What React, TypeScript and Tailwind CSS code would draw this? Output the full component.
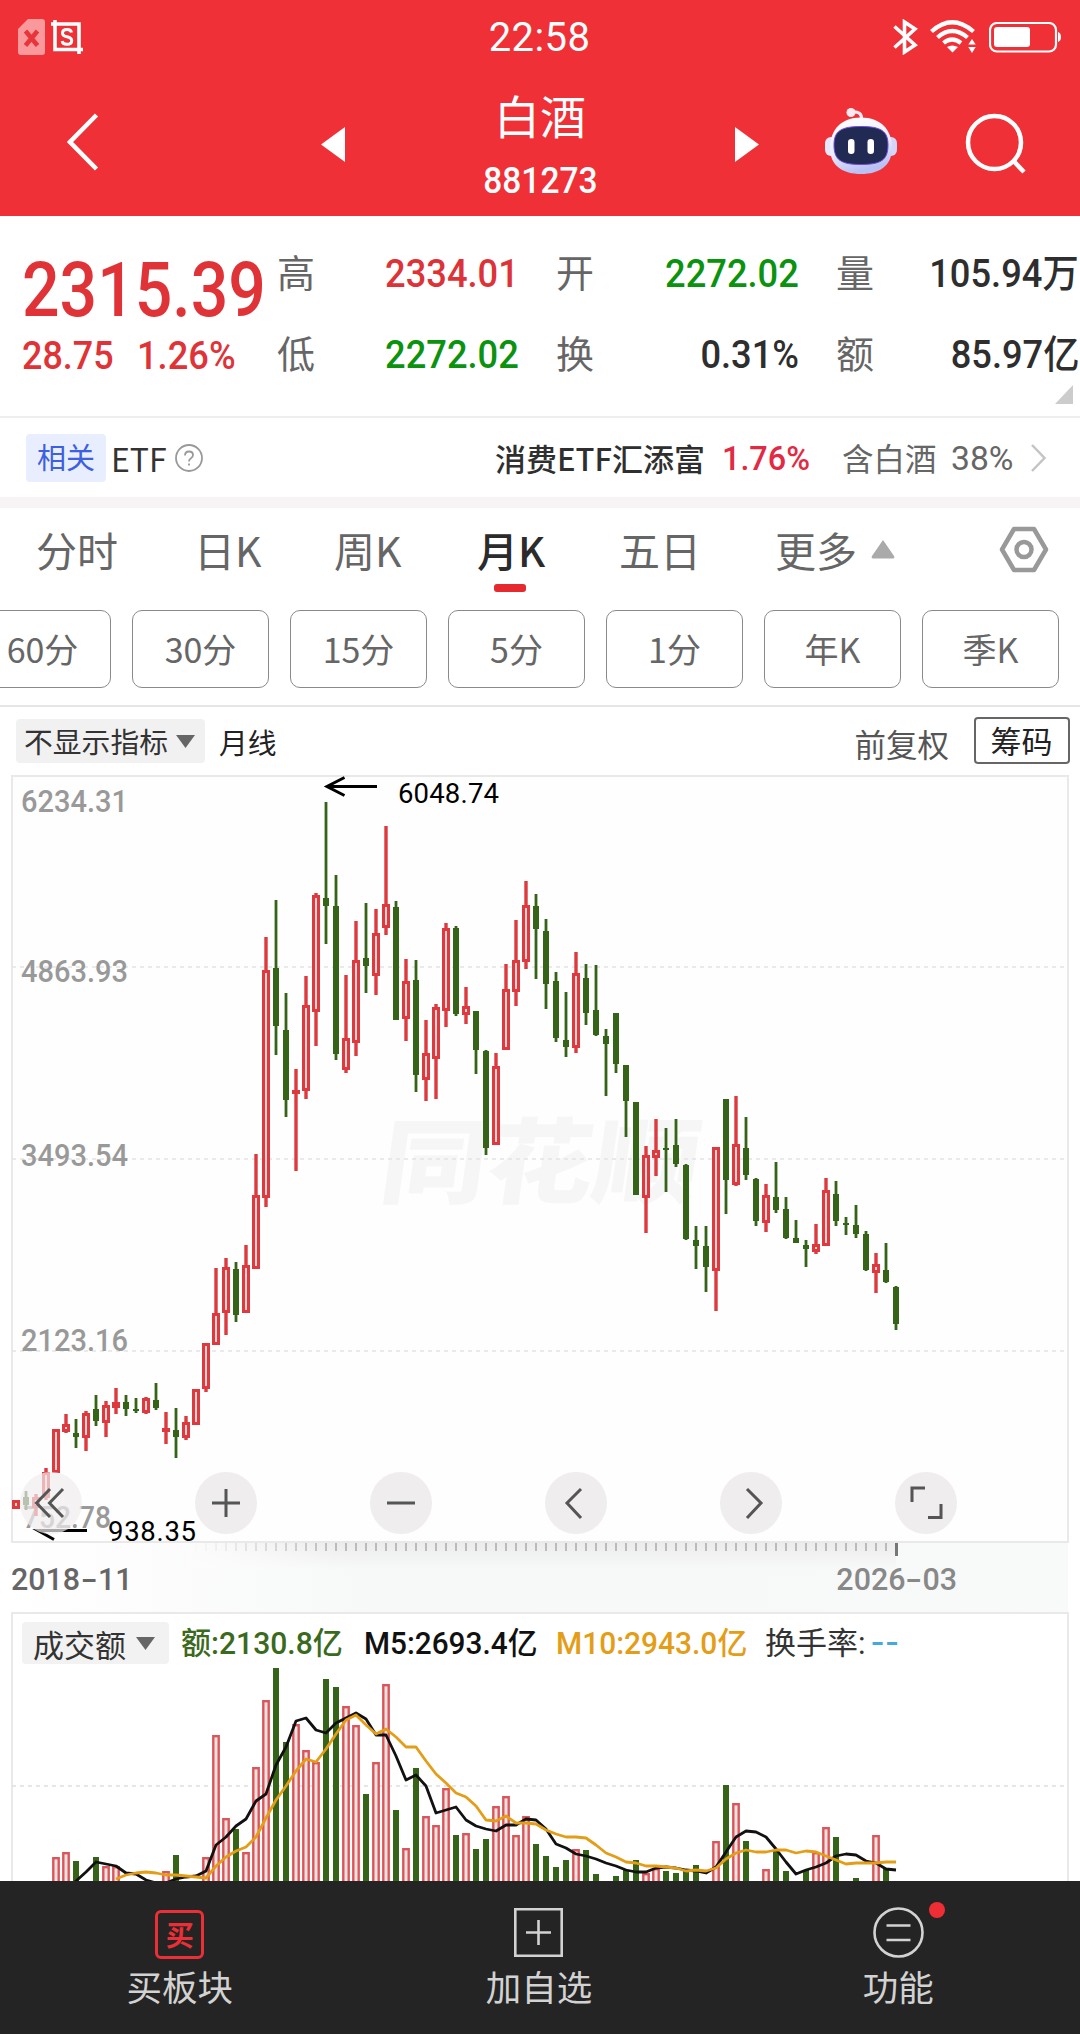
import type { ReactNode } from "react";
import clsx from "clsx";

type Candle = ["r" | "g", number, number, number, number];

// direction, high, body top, body bottom, low
const candles: Candle[] = [
  ["r", 1500, 1500, 1509, 1509], ["g", 1491, 1497, 1505, 1510], ["r", 1494, 1497, 1508, 1516], ["r", 1468, 1472, 1498, 1500],
  ["r", 1429, 1429, 1473, 1473], ["r", 1414, 1424, 1432, 1433], ["g", 1419, 1433, 1437, 1448], ["r", 1411, 1413, 1438, 1451],
  ["g", 1395, 1409, 1421, 1426], ["r", 1401, 1405, 1423, 1437], ["r", 1388, 1402, 1408, 1414], ["g", 1395, 1402, 1409, 1416],
  ["g", 1398, 1409, 1411, 1413], ["r", 1397, 1398, 1413, 1414], ["g", 1383, 1400, 1408, 1410], ["r", 1412, 1428, 1431, 1444],
  ["g", 1408, 1430, 1437, 1458], ["r", 1416, 1422, 1438, 1440], ["r", 1389, 1389, 1425, 1425], ["r", 1343, 1343, 1389, 1392],
  ["r", 1268, 1313, 1345, 1345], ["r", 1258, 1267, 1313, 1335], ["g", 1262, 1269, 1315, 1322], ["r", 1245, 1265, 1313, 1313],
  ["r", 1154, 1195, 1269, 1269], ["r", 937, 970, 1198, 1207], ["g", 900, 968, 1026, 1055], ["g", 993, 1030, 1100, 1117],
  ["r", 1069, 1090, 1094, 1171], ["r", 976, 1005, 1091, 1099], ["r", 893, 895, 1012, 1046], ["g", 802, 898, 906, 944],
  ["g", 875, 906, 1054, 1060], ["r", 975, 1038, 1070, 1073], ["r", 921, 960, 1043, 1056], ["g", 903, 958, 966, 993],
  ["r", 909, 933, 976, 995], ["r", 826, 904, 928, 935], ["g", 901, 907, 1020, 1020], ["r", 959, 981, 1019, 1041],
  ["g", 960, 980, 1075, 1092], ["r", 1020, 1053, 1080, 1101], ["r", 1004, 1007, 1059, 1099], ["r", 923, 928, 1011, 1027],
  ["g", 926, 928, 1014, 1016], ["r", 987, 1006, 1015, 1024], ["g", 1011, 1011, 1050, 1074], ["g", 1050, 1051, 1148, 1155],
  ["r", 1053, 1066, 1145, 1145], ["r", 964, 989, 1050, 1050], ["r", 920, 960, 992, 1006], ["r", 881, 905, 962, 969],
  ["g", 894, 906, 929, 979], ["g", 919, 931, 984, 1009], ["g", 972, 981, 1038, 1042], ["g", 992, 1040, 1047, 1057],
  ["r", 952, 973, 1048, 1053], ["g", 964, 978, 1013, 1025], ["g", 965, 1010, 1035, 1036], ["g", 1029, 1036, 1044, 1096],
  ["g", 1013, 1013, 1064, 1073], ["g", 1065, 1065, 1101, 1137], ["g", 1102, 1102, 1195, 1195], ["r", 1146, 1155, 1198, 1233],
  ["r", 1119, 1150, 1158, 1176], ["g", 1128, 1148, 1150, 1192], ["g", 1119, 1145, 1164, 1167], ["g", 1164, 1165, 1239, 1240],
  ["g", 1226, 1240, 1246, 1269], ["g", 1226, 1246, 1267, 1292], ["r", 1147, 1147, 1271, 1311], ["g", 1099, 1099, 1180, 1214],
  ["r", 1096, 1144, 1185, 1186], ["g", 1117, 1148, 1175, 1180], ["g", 1178, 1179, 1221, 1226], ["r", 1184, 1195, 1223, 1232],
  ["g", 1162, 1197, 1210, 1213], ["g", 1197, 1209, 1238, 1239], ["g", 1220, 1238, 1243, 1243], ["g", 1240, 1245, 1249, 1267],
  ["r", 1224, 1244, 1252, 1254], ["r", 1178, 1190, 1246, 1246], ["g", 1181, 1194, 1221, 1226], ["g", 1217, 1223, 1225, 1235],
  ["g", 1205, 1225, 1234, 1238], ["g", 1231, 1234, 1270, 1271], ["r", 1253, 1264, 1273, 1293], ["g", 1243, 1270, 1282, 1283],
  ["g", 1286, 1287, 1324, 1330],
];

// top edge of each turnover bar, 0 where the bar is below the fold
const turnover = [
  0, 0, 0, 0, 1857, 1852, 1861, 0, 1857, 1866, 1866, 0, 0, 0, 0, 1871, 1855, 0, 0, 1857,
  1735, 1818, 1829, 1852, 1767, 1700, 1668, 1742, 1724, 1750, 1762, 1679, 1687, 1706, 1725, 1794, 1762, 1684, 1810, 1848,
  1768, 1816, 1825, 1788, 1835, 1833, 1849, 1839, 1806, 1796, 1835, 1816, 1844, 1856, 1867, 1860, 1849, 1850, 1874, 0,
  1876, 1870, 1860, 1873, 1868, 1871, 1873, 1870, 1865, 0, 1841, 1785, 1803, 1841, 0, 1869, 1851, 1871, 0, 1870,
  1852, 1827, 1837, 0, 1878, 0, 1835, 1869, 0,
];

// both averages start at their own month index
const ma5Start = 5;
const ma5 = [
  1890, 1881, 1872, 1862, 1864, 1866, 1873, 1874, 1880, 1883, 1883, 1879, 1877, 1876, 1871, 1845, 1837, 1826, 1819, 1801,
  1794, 1765, 1747, 1721, 1718, 1730, 1733, 1723, 1718, 1713, 1719, 1735, 1735, 1756, 1780, 1775, 1786, 1813, 1810, 1807,
  1820, 1826, 1829, 1831, 1825, 1825, 1819, 1820, 1829, 1844, 1848, 1854, 1856, 1859, 1863, 1866, 1870, 1872, 1872, 1868,
  1867, 1868, 1870, 1871, 1873, 1867, 1852, 1837, 1831, 1832, 1837, 1849, 1862, 1874, 1870, 1867, 1863, 1856, 1854, 1855,
  1861, 1863, 1869, 1870,
];
const ma10Start = 10;
const ma10 = [
  1879, 1875, 1873, 1872, 1873, 1875, 1875, 1876, 1877, 1878, 1866, 1857, 1851, 1847, 1837, 1818, 1800, 1786, 1771, 1759,
  1762, 1749, 1734, 1720, 1715, 1725, 1734, 1729, 1737, 1747, 1747, 1761, 1774, 1783, 1793, 1797, 1806, 1820, 1821, 1816,
  1823, 1823, 1824, 1830, 1834, 1837, 1837, 1838, 1845, 1853, 1857, 1862, 1863, 1866, 1866, 1867, 1868, 1871, 1870, 1871,
  1868, 1859, 1853, 1850, 1852, 1852, 1850, 1850, 1853, 1851, 1852, 1856, 1860, 1864, 1863, 1863, 1863, 1862, 1862,
];

const RED = "#dc3a3e";
const GREEN = "#356318";

const xAt = (i: number) => 16 + i * 10;
const toPoints = (values: number[], start: number) =>
  values.map((y, i) => `${xAt(i + start)},${y}`).join(" ");

interface NumProps {
  children: ReactNode;
  className?: string;
}

// condensed digits
function Num({ children, className }: NumProps) {
  return (
    <span
      className={clsx(
        "inline-block whitespace-nowrap font-['Roboto','Noto_Sans_CJK_SC',sans-serif] font-medium",
        className,
      )}
    >
      {children}
    </span>
  );
}

function StatusBar() {
  return (
    <div className="flex h-[74px] items-center justify-between pl-[18px] pr-[19px]">
      <div className="flex w-[400px] items-center gap-[6px]">
        <svg width="27" height="36" viewBox="0 0 27 36">
          <path d="M10 0H24Q27 0 27 3V33Q27 36 24 36H3Q0 36 0 33V10Z" fill="#f9999c" />
          <path d="M7.500 12L19.500 26.500M19.500 12L7.500 26.500" stroke="#e8343a" strokeWidth="4.500" />
        </svg>
        <svg width="32" height="34" viewBox="0 0 32 34" fill="none" stroke="#fff" strokeWidth="3.600">
          <path d="M0 4H28V34M4 0V29.500H32" />
          <path
            d="M20.500 12.500Q20 9.500 16 9.500Q11.500 9.500 11.500 13Q11.500 16 16 16.700Q20.700 17.500 20.700 20.700Q20.700 24.200 16 24.200Q11.500 24.200 11.200 21"
            strokeWidth="3"
          />
        </svg>
      </div>
      <span className="pt-[2px] font-['Roboto',sans-serif] text-[40px] leading-none tracking-[.4px] text-white">22:58</span>
      <div className="flex w-[400px] items-center justify-end gap-3">
        <svg width="25" height="36" viewBox="0 0 25 36" fill="none" stroke="#fff" strokeWidth="3.600">
          <path d="M1.500 7.500L22 26L11.500 33V3L22 10L1.500 28.500" />
        </svg>
        <svg width="47" height="34" viewBox="0 0 47 34" fill="none" stroke="#fff" strokeWidth="4.200">
          <path d="M1.500 11.500Q22 -7 43.500 11.500" />
          <path d="M7.500 17.500Q22 4.500 37.500 17.500" />
          <path d="M13.500 23Q22 16 31 23" />
          <path d="M17 27Q22 24 28 27L22.500 32.500Z" fill="#fff" stroke="none" />
          <path d="M42 19L45.700 24.500H38.300ZM42 33L45.700 27H38.300Z" fill="#fff" stroke="none" />
        </svg>
        <svg width="72" height="31" viewBox="0 0 72 31">
          <rect x="1" y="1" width="66" height="28.500" rx="7" fill="none" stroke="#fff" strokeWidth="2.200" />
          <rect x="5" y="5" width="36" height="20" rx="3" fill="#fff" />
          <path d="M69 10Q72 11 72 15Q72 19 69 20Z" fill="#fff" />
        </svg>
      </div>
    </div>
  );
}

function Robot() {
  return (
    <svg width="72" height="67" viewBox="0 0 72 67">
      <defs>
        <linearGradient id="shell" x1="0" y1="0" x2="0.300" y2="1">
          <stop offset="0" stopColor="#ffffff" />
          <stop offset="0.600" stopColor="#ecedfd" />
          <stop offset="1" stopColor="#b9c1f4" />
        </linearGradient>
      </defs>
      <circle cx="26" cy="4.500" r="4.500" fill="#fbe9f1" />
      <path d="M27 4Q37 3 36.500 11" fill="none" stroke="#fbe9f1" strokeWidth="3.200" />
      <rect x="0" y="29" width="14" height="19" rx="6" fill="#e6e7fb" />
      <rect x="58" y="29" width="14" height="19" rx="6" fill="#d3d5f9" />
      <path d="M36 9.500C56 9.500 67 22 67 40C67 58 54 66 36 66C18 66 5 58 5 40C5 22 16 9.500 36 9.500Z" fill="url(#shell)" />
      <path
        d="M36 18.500C56 18.500 63 23 63 37C63 52 56 56.500 36 56.500C16 56.500 9 52 9 37C9 23 16 18.500 36 18.500Z"
        fill="#212a53"
        stroke="#6f4ae0"
        strokeWidth="1"
      />
      <rect x="23" y="31" width="6.500" height="15" rx="3.200" fill="#fff" />
      <rect x="42.500" y="31" width="6.500" height="15" rx="3.200" fill="#fff" />
    </svg>
  );
}

function Header() {
  return (
    <header className="h-[216px] bg-[#ef3036]">
      <StatusBar />
      <div className="flex h-[142px] pl-[67px]">
        <svg className="mt-[39px]" width="32" height="58" viewBox="0 0 32 58" fill="none" stroke="#fff" strokeWidth="4.500">
          <path d="M29.500 2L3 29L29.500 56" />
        </svg>
        <svg className="ml-[222px] mt-[53px]" width="24" height="35" viewBox="0 0 24 35" fill="#fff">
          <path d="M24 0V35L0 17.500Z" />
        </svg>
        <div className="ml-[115px] flex w-[160px] flex-col items-center text-white">
          <h1 className="mt-[15px] text-[46px] leading-[50px]">白酒</h1>
          <Num className="mt-[24px] scale-x-[.93] text-[36px] leading-[36px]">881273</Num>
        </div>
        <svg className="ml-[115px] mt-[53px]" width="24" height="35" viewBox="0 0 24 35" fill="#fff">
          <path d="M0 0V35L24 17.500Z" />
        </svg>
        <div className="ml-[66px] mt-[34px]">
          <Robot />
        </div>
        <svg className="ml-[68px] mt-[39px]" width="62" height="62" viewBox="0 0 62 62" fill="none" stroke="#fff" strokeWidth="4.500">
          <circle cx="29.500" cy="29.500" r="26.500" />
          <path d="M48.500 48L59 59" strokeWidth="4.500" />
        </svg>
      </div>
    </header>
  );
}

interface QuoteCellProps {
  label: string;
  value: string;
  tone: string;
  width: string;
}

function QuoteCell({ label, value, tone, width }: QuoteCellProps) {
  return (
    <div className={clsx("flex h-[81px] shrink-0 items-center justify-between", width)}>
      <span className="pb-[7px] text-[38px] leading-none text-[#666]">{label}</span>
      <Num className={clsx("origin-right scale-x-[.93] text-[39px] leading-none", tone)}>{value}</Num>
    </div>
  );
}

function Quote() {
  return (
    <section className="relative flex h-[202px] border-b-2 border-[#eeeeee]">
      <div className="w-[277px] pl-[22px] text-[#e03337]">
        <Num className="mt-[36px] origin-left scale-x-[.87] text-[76px] leading-[76px]">2315.39</Num>
        <div className="mt-[9px] flex">
          <Num className="w-[115px] origin-left scale-x-[.92] text-[39px] leading-[39px]">28.75</Num>
          <Num className="origin-left scale-x-[.93] text-[39px] leading-[39px]">1.26%</Num>
        </div>
      </div>
      <div className="mt-[18px] flex h-[162px] flex-col">
        <div className="flex gap-[37px]">
          <QuoteCell label="高" value="2334.01" tone="text-[#dd3338]" width="w-[242px]" />
          <QuoteCell label="开" value="2272.02" tone="text-[#0b930f]" width="w-[243px]" />
          <QuoteCell label="量" value="105.94万" tone="text-[#2e2e2e]" width="w-[243px]" />
        </div>
        <div className="flex gap-[37px]">
          <QuoteCell label="低" value="2272.02" tone="text-[#0b930f]" width="w-[242px]" />
          <QuoteCell label="换" value="0.31%" tone="text-[#2e2e2e]" width="w-[243px]" />
          <QuoteCell label="额" value="85.97亿" tone="text-[#2e2e2e]" width="w-[243px]" />
        </div>
      </div>
      <svg className="absolute right-[7px] top-[169px]" width="18" height="19" viewBox="0 0 18 19" fill="#cccccc">
        <path d="M18 0V19H0Z" />
      </svg>
    </section>
  );
}

function EtfRow() {
  return (
    <section className="flex h-[79px] items-center pl-[26px] text-[31px] leading-none">
      <span className="flex h-12 w-20 items-center justify-center rounded-[4px] bg-[#e9eeff] pb-[2px] text-[29px] text-[#3c60de]">
        相关
      </span>
      <span className="ml-[5px] w-[58px] text-[32px] text-[#333]">ETF</span>
      <svg className="ml-[5px]" width="30" height="30" viewBox="0 0 30 30" fill="none" stroke="#999">
        <circle cx="15" cy="15" r="13" strokeWidth="1.800" />
        <path d="M11 12.500Q11 8.500 15 8.500Q19 8.500 19 12Q19 14 17 15.200Q15 16.400 15 18.500M15 20.500V22.500" strokeWidth="1.800" />
      </svg>
      <span className="ml-[291px] w-[227px] whitespace-nowrap font-medium text-[#2f2f2f]">消费ETF汇添富</span>
      <Num className="w-[120px] origin-left scale-x-[.98] pt-[2px] text-[33px] text-[#e22a45]">1.76%</Num>
      <span className="w-[109px] text-[31.500px] text-[#666]">含白酒</span>
      <Num className="w-[79px] origin-left scale-x-[1.02] pt-[2px] text-[33px] !font-normal text-[#666]">38%</Num>
      <svg width="17" height="30" viewBox="0 0 17 30" fill="none" stroke="#c4c4c4" strokeWidth="2.500">
        <path d="M2 2L14.500 15L2 28" />
      </svg>
    </section>
  );
}

const tabs = [
  { label: "分时", width: "w-[158px]" },
  { label: "日K", width: "w-[140px]" },
  { label: "周K", width: "w-[143px]" },
  { label: "月K", width: "w-[142px]" },
  { label: "五日", width: "w-[156px]" },
  { label: "更多", width: "w-[96px]" },
];

function PeriodTabs() {
  return (
    <nav className="flex h-[102px] pl-[36px] text-[41px] text-[#666]">
      {tabs.map((tab) => {
        const active = tab.label === "月K";
        return (
          <div key={tab.label} className={clsx("flex shrink-0 flex-col", tab.width)}>
            <span className={clsx("mt-[17px] leading-[48px]", active && "font-medium text-[#2b2b2b]")}>{tab.label}</span>
            {active && <span className="ml-[17px] mt-[11px] h-2 w-8 rounded-[3px] bg-[#e5292f]" />}
          </div>
        );
      })}
      <svg className="mt-[32px]" width="24" height="19" viewBox="0 0 24 19" fill="#aaaaaa">
        <path d="M12 0L23 16Q24 18.500 22 18.500H2Q0 18.500 1 16Z" />
      </svg>
      <svg className="ml-[104px] mt-[18px]" width="50" height="47" viewBox="0 0 50 47" fill="none" stroke="#999">
        <path d="M15 3H35L47 23.500L35 44H15L3 23.500Z" strokeWidth="4.500" strokeLinejoin="round" />
        <circle cx="25" cy="23.500" r="7.500" strokeWidth="4.500" />
      </svg>
    </nav>
  );
}

const intervals = ["60分", "30分", "15分", "5分", "1分", "年K", "季K"];

function IntervalChips() {
  return (
    <div className="flex h-[97px] gap-[21px] overflow-hidden border-b-2 border-[#e6e6e6]">
      {intervals.map((name, i) => (
        <button
          key={name}
          className={clsx(
            "h-[78px] w-[137px] shrink-0 rounded-[10px] border border-[#8a8a8a] text-[34px] leading-none text-[#666]",
            i === 0 && "-ml-[26px]",
          )}
        >
          {name}
        </button>
      ))}
    </div>
  );
}

function DownArrow({ className }: { className?: string }) {
  return (
    <svg className={className} width="19" height="13" viewBox="0 0 19 13" fill="#666">
      <path d="M0 0H19L9.500 13Z" />
    </svg>
  );
}

function IndicatorBar() {
  return (
    <div className="flex h-[68px] items-start pl-4 pt-[10px]">
      <div className="mt-[2px] flex h-[44px] w-[189px] items-center rounded-[4px] bg-[#f1f1f1] pl-[8px] text-[28.800px] leading-none text-[#333]">
        不显示指标
        <DownArrow className="ml-[8px]" />
      </div>
      <span className="ml-[14px] mt-[11px] text-[28.800px] leading-[28px] text-[#222]">月线</span>
      <span className="ml-[578px] mt-[11px] w-[96px] text-[31.500px] leading-[31px] text-[#555]">前复权</span>
      <span className="ml-[23px] flex h-[47px] w-[96px] items-center justify-center rounded-[4px] border-2 border-[#666] pb-[2px] text-[31px] leading-none text-[#222]">
        筹码
      </span>
    </div>
  );
}

const axisLabels = [
  { text: "6234.31", y: 812 },
  { text: "4863.93", y: 982 },
  { text: "3493.54", y: 1166 },
  { text: "2123.16", y: 1351 },
];

function RoundButton({ children, faded }: { children: ReactNode; faded?: boolean }) {
  return (
    <button className={clsx("h-[62px] w-[62px] rounded-full", faded ? "bg-[#efedee]/70" : "bg-[#efedee]")}>
      <svg width="62" height="62" viewBox="0 0 62 62" fill="none" stroke="#555" strokeWidth="3">
        {children}
      </svg>
    </button>
  );
}

function PriceChart() {
  return (
    <section className="relative">
      <svg className="block" width="1080" height="837" viewBox="0 775 1080 837">
        <defs>
          <linearGradient id="axisFade" x1="0" x2="1" y1="0" y2="0">
            <stop offset="0" stopColor="#ffffff" />
            <stop offset="0.350" stopColor="#f7f8f8" />
            <stop offset="1" stopColor="#f8f9f9" />
          </linearGradient>
          <linearGradient id="tickShade" x1="0" x2="0" y1="0" y2="1">
            <stop offset="0" stopColor="#ececec" />
            <stop offset="1" stopColor="#ececec" stopOpacity="0" />
          </linearGradient>
          <linearGradient id="tickFade" x1="0" x2="1" y1="0" y2="0">
            <stop offset="0" stopColor="#fcfcfc" />
            <stop offset="1" stopColor="#fcfcfc" stopOpacity="0" />
          </linearGradient>
        </defs>
        <rect x="12" y="1542" width="1056" height="70" fill="url(#axisFade)" />
        <rect x="190" y="1543" width="706" height="26" fill="url(#tickShade)" />
        <rect x="12" y="776" width="1056" height="766" fill="#fefefe" stroke="#e9e9e9" strokeWidth="2" />
        <text
          transform="translate(377 1196) skewX(-8) scale(1.030 .9)"
          fontFamily="Noto Sans CJK SC, sans-serif"
          fontSize="103"
          fontWeight="900"
          fill="#f6f6f6"
        >
          同花顺
        </text>
        {[967, 1159, 1351].map((y) => (
          <line key={y} x1="12" x2="1068" y1={y} y2={y} stroke="#e4e4e4" strokeWidth="1.500" strokeDasharray="4 4" />
        ))}
        <g fontFamily="Roboto, sans-serif" fontWeight="500" fontSize="31" fill="#999">
          {axisLabels.map((l) => (
            <text key={l.text} x="21" y={l.y} textLength="107" lengthAdjust="spacingAndGlyphs">
              {l.text}
            </text>
          ))}
          <text x="23" y="1528" textLength="88" lengthAdjust="spacingAndGlyphs">
            752.78
          </text>
        </g>
        {candles.map(([dir, high, top, bottom, low], i) => {
          const x = xAt(i);
          const color = dir === "r" ? RED : GREEN;
          return (
            <g key={i}>
              <line x1={x} x2={x} y1={high} y2={low} stroke={color} strokeWidth={dir === "r" ? 3.4 : 2.8} />
              {dir === "r" ? (
                <rect
                  x={x - 2.5}
                  y={top + 1.5}
                  width="5"
                  height={Math.max(bottom - top - 3, 1)}
                  fill={bottom - top < 7 ? RED : "#fad3d4"}
                  stroke={RED}
                  strokeWidth="3"
                />
              ) : (
                <rect x={x - 3} y={top} width="6" height={bottom - top} fill={GREEN} />
              )}
            </g>
          );
        })}
        <g fill="none" stroke="#000" strokeWidth="3">
          <path d="M377 786.500H327M344.500 777.500L327 786.500L344.500 795.500" />
          <path d="M87 1530.500H38L54 1539.500" />
        </g>
        <g fontFamily="Roboto, sans-serif" fontSize="27.500" fill="#000">
          <text x="398" y="803" textLength="101">
            6048.74
          </text>
          <text x="108" y="1541" textLength="88">
            938.35
          </text>
        </g>
        {candles.slice(18, 88).map((_, i) => (
          <line key={i} x1={xAt(i + 18)} x2={xAt(i + 18)} y1="1543" y2="1551" stroke="#999" strokeWidth="1.200" />
        ))}
        <rect x="188" y="1543" width="150" height="26" fill="url(#tickFade)" />
        <rect x="895" y="1543" width="3" height="13" fill="#777" />
      </svg>
      <div className="absolute left-[20px] top-[697px] flex gap-[113px]">
        <RoundButton faded>
          <path d="M30 17L16.500 31L30 45M43 17L29.500 31L43 45" />
        </RoundButton>
        <RoundButton>
          <path d="M17 31H45M31 17V45" />
        </RoundButton>
        <RoundButton>
          <path d="M17 31H45" />
        </RoundButton>
        <RoundButton>
          <path d="M36 17L22 31L36 46" />
        </RoundButton>
        <RoundButton>
          <path d="M27 17L41 31L27 46" />
        </RoundButton>
        <RoundButton>
          <path d="M30 16H17V30M33 45.500H46V32" />
        </RoundButton>
      </div>
      <div className="absolute bottom-[17px] left-[11px] flex w-[946px] justify-between text-[32px] leading-[32px]">
        <Num className="origin-left scale-x-[.95] text-[#666]">
          2018<span className="mx-[4px] inline-block scale-x-[1.6]">-</span>11
        </Num>
        <Num className="origin-right scale-x-[.95] text-[#888]">
          2026<span className="mx-[3.500px] inline-block scale-x-[1.6]">-</span>03
        </Num>
      </div>
    </section>
  );
}

function TurnoverChart() {
  return (
    <section className="h-[269px] overflow-hidden">
      <div className="mx-[11px] h-[54px] border-2 border-b-0 border-[#e9e9e9]">
        <div className="flex h-[58px] items-center pl-[9px] text-[31px] leading-none">
          <div className="flex h-[42px] w-[147px] items-center rounded-[4px] bg-[#f2f2f2] pl-[11px] text-[#333]">
            成交额
            <DownArrow className="ml-[10px]" />
          </div>
          <Num className="ml-[12px] w-[183px] origin-left scale-x-[.97] text-[#3b691d]">额:2130.8亿</Num>
          <Num className="w-[192px] origin-left scale-x-[.96] text-[#111]">M5:2693.4亿</Num>
          <Num className="w-[209px] origin-left scale-x-[.965] text-[#e39d17]">M10:2943.0亿</Num>
          <Num className="w-[106px] !font-normal text-[#333]">换手率:</Num>
          <Num className="origin-left scale-x-[1.25] pb-[1px] tracking-[1px] text-[#45a9dc]">--</Num>
        </div>
      </div>
      <svg className="block" width="1080" height="215" viewBox="0 1666 1080 215">
        <path d="M12 1660V1890M1068 1660V1890" stroke="#e9e9e9" strokeWidth="2" />
        <line x1="12" x2="1068" y1="1786" y2="1786" stroke="#dedede" strokeWidth="1.500" strokeDasharray="4 4" />
        {turnover.map((top, i) => {
          if (!top) return null;
          return candles[i][0] === "g" ? (
            <rect key={i} x={xAt(i) - 3} y={top} width="6" height={1890 - top} fill={GREEN} />
          ) : (
            <rect
              key={i}
              x={xAt(i) - 2.7}
              y={top + 1.2}
              width="5.400"
              height={1890 - top}
              fill="#f9e2e2"
              stroke="#d9565b"
              strokeWidth="2.400"
            />
          );
        })}
        <g fill="none" strokeWidth="2.800" strokeLinejoin="round">
          <polyline points={toPoints(ma5, ma5Start)} stroke="#111" />
          <polyline points={toPoints(ma10, ma10Start)} stroke="#e39d17" />
        </g>
      </svg>
    </section>
  );
}

function BottomBar() {
  return (
    <footer className="grid h-[153px] grid-cols-3 bg-[#242424] pr-[2px] text-[35.500px] text-[#d2d2d2]">
      <button className="flex flex-col items-center">
        <span className="mt-[29px] flex h-[49px] w-[49px] items-center justify-center rounded-[6px] border-[3px] border-[#ea3036] pb-[2px] text-[28px] font-bold leading-none text-[#ea3036]">
          买
        </span>
        <span className="mt-[9px] leading-[36px]">买板块</span>
      </button>
      <button className="flex flex-col items-center">
        <svg className="mt-[27px]" width="49" height="49" viewBox="0 0 49 49" fill="none" stroke="#d2d2d2" strokeWidth="2.600">
          <path d="M1.300 1.300H47.700V47.700H1.300ZM12 24.500H37M24.500 12V37" />
        </svg>
        <span className="mt-[11px] leading-[36px]">加自选</span>
      </button>
      <button className="relative flex flex-col items-center">
        <svg className="mt-[26px]" width="51" height="51" viewBox="0 0 51 51" fill="none" stroke="#d2d2d2" strokeWidth="2.600">
          <circle cx="25.500" cy="25.500" r="24" />
          <path d="M13.500 18.500H37.500M13.500 33H37.500" />
        </svg>
        <span className="absolute left-[210px] top-[21px] h-4 w-4 rounded-full bg-[#ee2e34]" />
        <span className="mt-[10px] leading-[36px]">功能</span>
      </button>
    </footer>
  );
}

export default function App() {
  return (
    <div className="h-[2034px] w-[1080px] overflow-hidden bg-white font-['Noto_Sans_CJK_SC',sans-serif]">
      <Header />
      <Quote />
      <EtfRow />
      <div className="h-[11px] bg-[#f8f4f5]" />
      <PeriodTabs />
      <IntervalChips />
      <IndicatorBar />
      <PriceChart />
      <TurnoverChart />
      <BottomBar />
    </div>
  );
}
